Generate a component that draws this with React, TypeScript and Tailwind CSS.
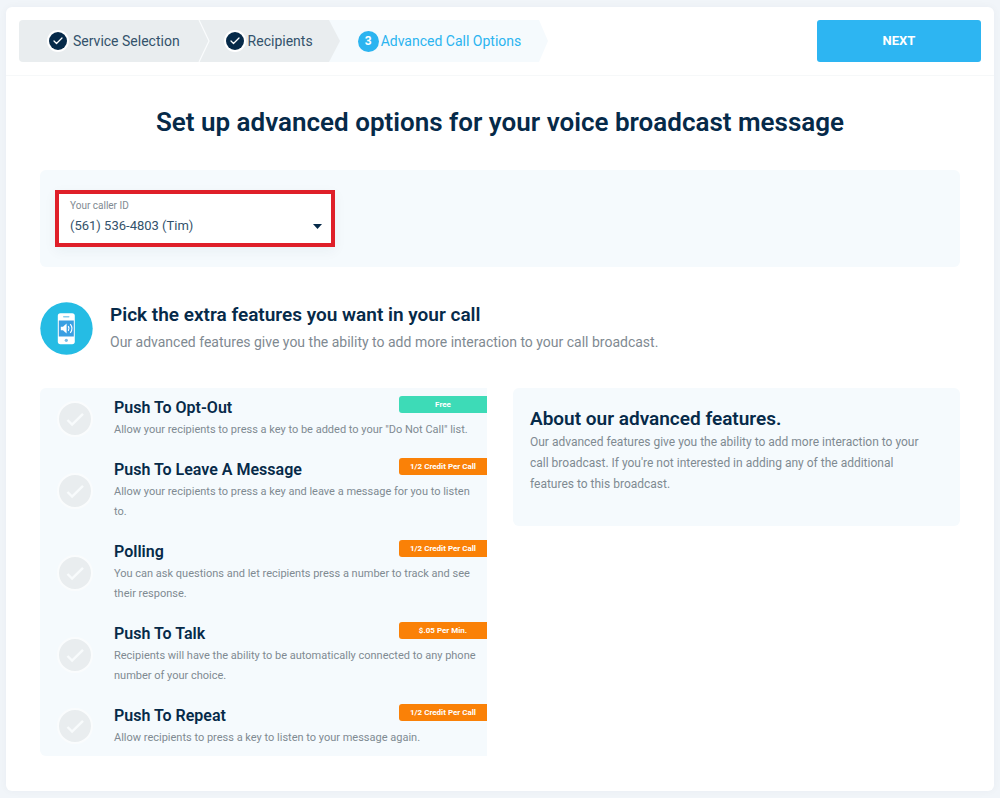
import { useState } from "react";
import { Check } from "lucide-react";

type Feature = { id: string; title: string; text: string; price: string; free?: boolean };

const features: Feature[] = [
  {
    id: "opt-out",
    title: "Push To Opt-Out",
    text: 'Allow your recipients to press a key to be added to your "Do Not Call" list.',
    price: "Free",
    free: true,
  },
  {
    id: "message",
    title: "Push To Leave A Message",
    text: "Allow your recipients to press a key and leave a message for you to listen to.",
    price: "1/2 Credit Per Call",
  },
  {
    id: "polling",
    title: "Polling",
    text: "You can ask questions and let recipients press a number to track and see their response.",
    price: "1/2 Credit Per Call",
  },
  {
    id: "talk",
    title: "Push To Talk",
    text: "Recipients will have the ability to be automatically connected to any phone number of your choice.",
    price: "$.05 Per Min.",
  },
  {
    id: "repeat",
    title: "Push To Repeat",
    text: "Allow recipients to press a key to listen to your message again.",
    price: "1/2 Credit Per Call",
  },
];

function DoneBadge() {
  return (
    <span className="flex size-[22px] items-center justify-center rounded-full bg-white">
      <span className="flex size-[18px] items-center justify-center rounded-full bg-[#062a49] text-white">
        <Check className="size-3" strokeWidth={2.5} aria-hidden />
      </span>
    </span>
  );
}

function Steps() {
  return (
    <nav aria-label="Progress">
      <ol className="flex h-[42px] items-stretch text-sm leading-5 text-[#33526b]">
        <li className="flex items-center gap-1 rounded-l-sm bg-[#e9edef] pr-[18px] pl-7">
          <DoneBadge />
          Service Selection
        </li>
        <li className="flex bg-[#e9edef]">
          <svg className="h-full w-3" viewBox="0 0 12 42" fill="none" stroke="#fafcfd" strokeWidth="1.2" aria-hidden>
            <path d="M1 0 11 21 1 42" />
          </svg>
          <span className="flex items-center gap-0.5 pr-4 pl-[14px]">
            <DoneBadge />
            Recipients
          </span>
        </li>
        <li aria-current="step" className="flex text-[#2bb4f0]">
          <span className="flex items-center bg-[#f5fafd]">
            <svg className="h-full w-3" viewBox="0 0 12 42" aria-hidden>
              <path d="M0 0 11 21 0 42Z" fill="#e9edef" />
            </svg>
            <span className="flex items-center gap-0.5 pr-[18px] pl-[17px]">
              <span className="flex size-[21px] items-center justify-center rounded-full bg-[#2bb4f0] text-xs font-bold text-white">
                3
              </span>
              Advanced Call Options
            </span>
          </span>
          <svg className="h-full w-3" viewBox="0 0 12 42" aria-hidden>
            <path d="M0 0 9 21 0 42Z" fill="#f5fafd" />
          </svg>
        </li>
      </ol>
    </nav>
  );
}

function PhoneIcon() {
  return (
    <svg className="size-[53px] shrink-0" viewBox="0 0 53 53" aria-hidden>
      <circle cx="26.5" cy="26.5" r="26.2" fill="#25bce4" />
      <rect x="17.800" y="11.200" width="17" height="31" rx="2.600" fill="#fff" />
      <rect x="23" y="14" width="6.500" height="1.500" rx=".7" fill="#8bcdec" />
      <rect x="18.800" y="18.500" width="15" height="16" fill="#3a9fe2" />
      <circle cx="26.300" cy="38.300" r="1.600" fill="#75bde8" />
      <path d="M20.800 24.700h2.200l3.600-3.200v10l-3.600-3.200h-2.200z" fill="#fff" />
      <path d="M28.300 24.200q1.500 2.300 0 4.600M30.300 22.200q3.400 4.300 0 8.600" fill="none" stroke="#fff" strokeWidth="1.200" />
    </svg>
  );
}

function FeatureRow({ feature }: { feature: Feature }) {
  const badge = feature.free ? "bg-[#3ddbb7]" : "bg-[#fa8107]";
  return (
    <li className="group grid grid-cols-[74px_1fr] items-center">
      <span className="grid justify-center pr-1">
        <input
          id={feature.id}
          type="checkbox"
          className="col-start-1 row-start-1 size-9 appearance-none rounded-full border-2 border-[#fafcfd] bg-[#e9edef] checked:bg-[#2bb4f0]"
        />
        <svg
          className="pointer-events-none col-start-1 row-start-1 size-9"
          viewBox="0 0 36 36"
          fill="none"
          stroke="#f8fbfc"
          strokeWidth="2.4"
          aria-hidden
        >
          <path d="m10.500 19 4.600 4.600L26 12.800" />
        </svg>
      </span>
      <div className="pt-2 pb-2.5 group-last:pb-2">
        <div className="flex items-center justify-between">
          <label htmlFor={feature.id} className="text-base leading-6 font-semibold text-[#062a49]">
            {feature.title}
          </label>
          <span
            className={`w-[88px] self-start rounded-l-[3px] text-center text-[8px] leading-[17px] font-bold text-white ${badge}`}
          >
            {feature.price}
          </span>
        </div>
        <p className="pr-2 text-[11px] leading-5 text-[#7f8a92]">{feature.text}</p>
      </div>
    </li>
  );
}

export default function App() {
  const [caller, setCaller] = useState("tim");
  return (
    <div className="min-h-screen bg-[#f1f5f9] px-1.5 py-[7px] font-[Roboto,sans-serif] text-[#062a49]">
      <main className="rounded-md bg-white pb-[35px] shadow-[0_0_8px_rgba(20,50,80,0.04)]">
        <header className="flex items-start justify-between border-b border-[#f6f8f9] p-[13px]">
          <Steps />
          <button
            type="button"
            className="h-[42px] w-[164px] rounded-[3px] bg-[#2db5f2] text-[13px] font-bold text-white"
          >
            NEXT
          </button>
        </header>

        <div className="px-[34px] pt-7">
          <h1 className="text-center text-[26px] leading-9 font-semibold">
            Set up advanced options for your voice broadcast message
          </h1>

          <section className="mt-[30px] flex rounded-md bg-[#f5fafd] px-[15px] py-5">
            <div className="relative w-[280px] border-4 border-[#df1f29] bg-white shadow-[0_4px_12px_rgba(20,50,80,0.05)]">
              <label
                htmlFor="caller"
                className="pointer-events-none absolute top-[6px] left-[11px] text-[10px] leading-3 text-[#7f8a92]"
              >
                Your caller ID
              </label>
              <select
                id="caller"
                value={caller}
                onChange={(event) => setCaller(event.target.value)}
                className="h-[49px] w-full appearance-none bg-transparent pt-[15px] pr-8 pl-[11px] text-[13px] text-[#33526b] outline-none"
              >
                <option value="tim">(561) 536-4803 (Tim)</option>
              </select>
              <svg
                className="pointer-events-none absolute top-[30px] right-[9px] h-[5px] w-[9px]"
                viewBox="0 0 9 5"
                aria-hidden
              >
                <path d="M0 0h9L4.500 5z" fill="#062a49" />
              </svg>
            </div>
          </section>

          <section className="mt-[34px] flex items-center gap-[17px]">
            <PhoneIcon />
            <div>
              <h2 className="text-[19px] leading-7 font-semibold">Pick the extra features you want in your call</h2>
              <p className="text-sm leading-[26px] text-[#7f8a92]">
                Our advanced features give you the ability to add more interaction to your call broadcast.
              </p>
            </div>
          </section>

          <div className="mt-[33px] grid grid-cols-2 items-start gap-[26px]">
            <ul className="rounded-l-md bg-[#f5fafd]">
              {features.map((feature) => (
                <FeatureRow key={feature.id} feature={feature} />
              ))}
            </ul>
            <aside className="rounded-md bg-[#f5fafd] pt-[18px] pr-[30px] pb-[31px] pl-[17px]">
              <h2 className="text-[19px] leading-[26px] font-semibold">About our advanced features.</h2>
              <p className="text-xs leading-[21px] text-[#7f8a92]">
                Our advanced features give you the ability to add more interaction to your call broadcast. If
                you're not interested in adding any of the additional features to this broadcast.
              </p>
            </aside>
          </div>
        </div>
      </main>
    </div>
  );
}
